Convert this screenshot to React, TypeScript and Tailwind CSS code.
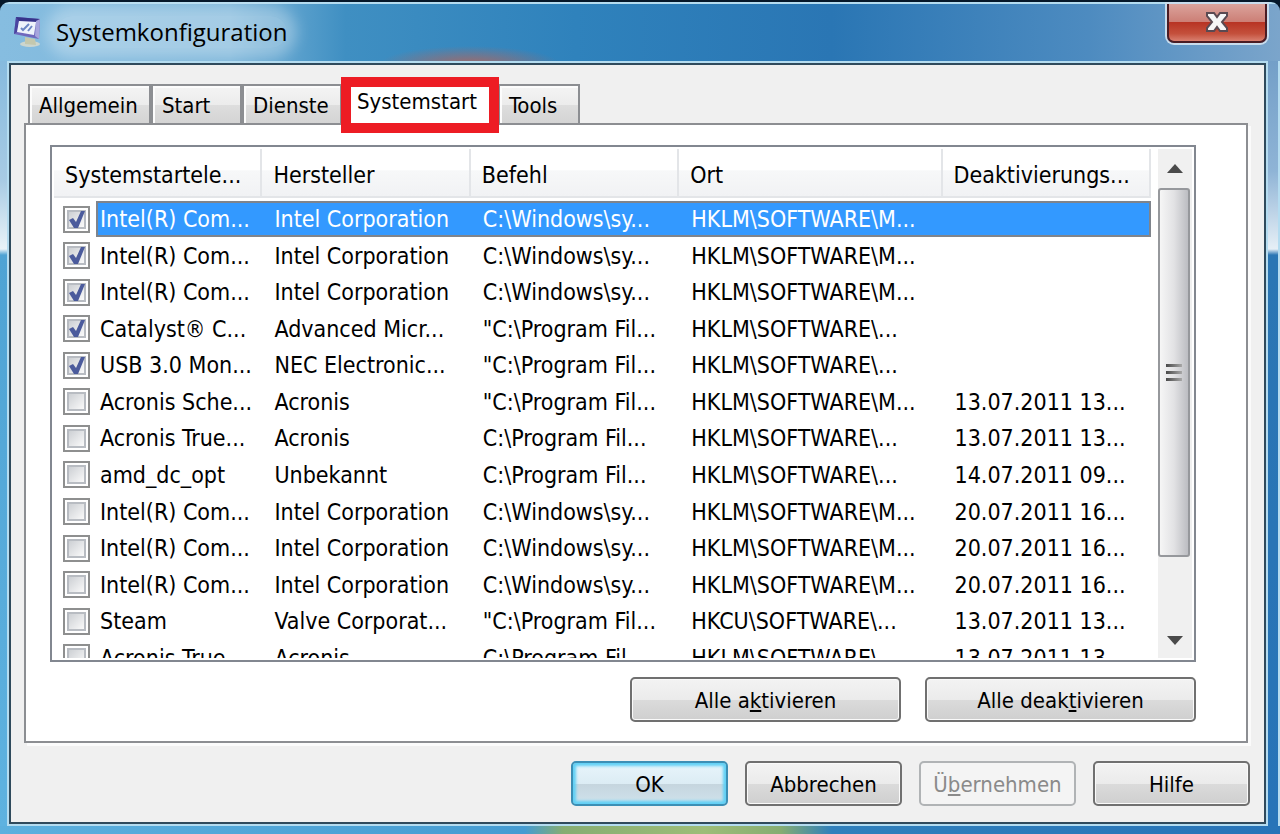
import { useState } from "react";
import clsx from "clsx";

const columns = ["Systemstartele...", "Hersteller", "Befehl", "Ort", "Deaktivierungs..."];

type Entry = { on: boolean; cells: string[] };

const entries: Entry[] = [
  { on: true, cells: ["Intel(R) Com...", "Intel Corporation", "C:\\Windows\\sy...", "HKLM\\SOFTWARE\\M...", ""] },
  { on: true, cells: ["Intel(R) Com...", "Intel Corporation", "C:\\Windows\\sy...", "HKLM\\SOFTWARE\\M...", ""] },
  { on: true, cells: ["Intel(R) Com...", "Intel Corporation", "C:\\Windows\\sy...", "HKLM\\SOFTWARE\\M...", ""] },
  { on: true, cells: ["Catalyst® C...", "Advanced Micr...", "\"C:\\Program Fil...", "HKLM\\SOFTWARE\\...", ""] },
  { on: true, cells: ["USB 3.0 Mon...", "NEC Electronic...", "\"C:\\Program Fil...", "HKLM\\SOFTWARE\\...", ""] },
  { on: false, cells: ["Acronis Sche...", "Acronis", "\"C:\\Program Fil...", "HKLM\\SOFTWARE\\M...", "13.07.2011 13..."] },
  { on: false, cells: ["Acronis True...", "Acronis", "C:\\Program Fil...", "HKLM\\SOFTWARE\\...", "13.07.2011 13..."] },
  { on: false, cells: ["amd_dc_opt", "Unbekannt", "C:\\Program Fil...", "HKLM\\SOFTWARE\\...", "14.07.2011 09..."] },
  { on: false, cells: ["Intel(R) Com...", "Intel Corporation", "C:\\Windows\\sy...", "HKLM\\SOFTWARE\\M...", "20.07.2011 16..."] },
  { on: false, cells: ["Intel(R) Com...", "Intel Corporation", "C:\\Windows\\sy...", "HKLM\\SOFTWARE\\M...", "20.07.2011 16..."] },
  { on: false, cells: ["Intel(R) Com...", "Intel Corporation", "C:\\Windows\\sy...", "HKLM\\SOFTWARE\\M...", "20.07.2011 16..."] },
  { on: false, cells: ["Steam", "Valve Corporat...", "\"C:\\Program Fil...", "HKCU\\SOFTWARE\\...", "13.07.2011 13..."] },
  { on: false, cells: ["Acronis True...", "Acronis", "C:\\Program Fil...", "HKLM\\SOFTWARE\\...", "13.07.2011 13..."] },
];

function MonitorIcon() {
  return (
    <svg viewBox="0 0 28 32" className="h-8 w-7" aria-hidden="true">
      <ellipse cx="16" cy="28" rx="10" ry="3" fill="#ccd6cf" />
      <path d="M11 21l10 2 1 6-11-1z" fill="#c4c8ae" />
      <path d="M2 1l24 2-1 20L0 18z" fill="#6f68bd" />
      <path d="M2 1l24 2-1 3L2 5z" fill="#37348a" />
      <path d="M2 1l3 4-2 11-3 2z" fill="#4a45a0" />
      <path d="M22 5l4-2-1 20-4-3z" fill="#a5a3dd" />
      <path d="M5 5l17 1-2 13L3 16z" fill="#eef3fb" />
      <path d="M7 12l2 2 6-6M14 15l4-5" fill="none" stroke="#6c86c4" strokeWidth="2" />
    </svg>
  );
}

function CheckBox({ label, defaultChecked }: { label: string; defaultChecked: boolean }) {
  return (
    <span className="relative block size-[27px] shrink-0">
      <input
        type="checkbox"
        aria-label={label}
        defaultChecked={defaultChecked}
        className="peer block size-[27px] appearance-none border-2 border-[#8e8f8f] bg-white"
      />
      <span className="pointer-events-none absolute inset-[4px] border-2 border-[#b8bcc2] bg-linear-to-br from-[#cdd0d4] to-[#fafafa]" />
      <svg viewBox="0 0 27 27" className="pointer-events-none absolute inset-0 hidden peer-checked:block" aria-hidden="true">
        <path d="M6 14l4-2 3 4 5-11 4 0-7 17h-4z" fill="#4b5b9c" />
      </svg>
    </span>
  );
}

type PushProps = { children: React.ReactNode; wide?: boolean; primary?: boolean; disabled?: boolean };

function PushButton({ children, wide, primary, disabled }: PushProps) {
  return (
    <button
      type="button"
      disabled={disabled}
      className={clsx(
        "h-[45px] rounded-[5px] border-2 pt-[2px] text-[22px] leading-7",
        wide ? "w-[271px]" : "w-[157px]",
        disabled && "border-[#b0b3b5] bg-[#f4f4f4] text-[#8a8a8a]",
        primary &&
          "border-[#3c8fb5] bg-[linear-gradient(#e8f5fb_0%,#dcecf4_50%,#c5d5de_51%,#cfe2ec_100%)] shadow-[inset_0_0_3px_3px_#5fd0f5]",
        !disabled &&
          !primary &&
          "border-[#707070] bg-[linear-gradient(#f3f3f3_0%,#ebebeb_50%,#dbdbdb_51%,#cfcfcf_100%)] shadow-[inset_0_0_0_1px_#fafafa]",
      )}
    >
      {children}
    </button>
  );
}

function TabStrip() {
  const [active, setActive] = useState("Systemstart");
  const tabs = [
    { name: "Allgemein", width: "w-[123px]" },
    { name: "Start", width: "w-[91px]" },
    { name: "Dienste", width: "w-[100px]" },
    { name: "Systemstart", width: "w-[156px]" },
    { name: "Tools", width: "w-[82px]" },
  ];

  return (
    <div role="tablist" className="flex h-[39px] pl-1">
      {tabs.map((tab) => (
        <button
          key={tab.name}
          type="button"
          role="tab"
          aria-selected={tab.name === active}
          onClick={() => setActive(tab.name)}
          className={clsx(
            "relative text-left text-[22px] leading-8 whitespace-nowrap",
            tab.width,
            tab.name === active
              ? "bg-white pb-1 pl-[15px]"
              : "border-2 border-b-0 border-[#8c8e92] bg-[linear-gradient(#f4f4f4_0%,#ececec_50%,#dedede_51%,#d4d4d4_100%)] pt-[3px] pl-[9px] shadow-[inset_2px_2px_0_#fcfcfc]",
          )}
        >
          {tab.name}
          {tab.name === active && (
            <span className="pointer-events-none absolute -inset-x-px -top-[7px] z-10 h-[56px] border-[10px] border-[#ed1c24]" />
          )}
        </button>
      ))}
    </div>
  );
}

function ScrollBar() {
  return (
    <div className="flex w-[34px] shrink-0 flex-col bg-[#f0f0f0]">
      <button type="button" aria-label="Nach oben" className="flex h-[39px] items-center justify-center">
        <svg viewBox="0 0 16 9" className="h-[9px] w-4" aria-hidden="true">
          <path d="M8 0l8 9H0z" fill="#4a4a4a" />
        </svg>
      </button>
      <div className="flex-1">
        <div className="flex h-[369px] w-[32px] flex-col items-center justify-center gap-[4px] rounded-[3px] border-2 border-[#96989c] bg-linear-to-r from-[#f6f6f6] via-[#e2e2e4] to-[#bcbdc2]">
          <span className="h-[3px] w-4 bg-linear-to-r from-[#4a4a4a] to-[#a8a8a8]" />
          <span className="h-[3px] w-4 bg-linear-to-r from-[#4a4a4a] to-[#a8a8a8]" />
          <span className="h-[3px] w-4 bg-linear-to-r from-[#4a4a4a] to-[#a8a8a8]" />
        </div>
      </div>
      <button type="button" aria-label="Nach unten" className="flex h-[35px] items-center justify-center">
        <svg viewBox="0 0 16 9" className="h-[9px] w-4" aria-hidden="true">
          <path d="M0 0h16L8 9z" fill="#4a4a4a" />
        </svg>
      </button>
    </div>
  );
}

function StartupList() {
  return (
    <div className="flex h-[517px] overflow-hidden border-2 border-[#828790] bg-white p-[2px]">
      <div className="min-w-0 flex-1 overflow-hidden">
        <table className="h-[527px] w-full table-fixed border-collapse text-[23px] leading-8 whitespace-nowrap">
          <colgroup>
            <col className="w-[19%]" />
            <col className="w-[19%]" />
            <col className="w-[19%]" />
            <col className="w-[24%]" />
            <col className="w-[19%]" />
          </colgroup>
          <thead>
            <tr className="h-[52px]">
              {columns.map((name) => (
                <th key={name} className="p-0 pb-[3px] text-left font-normal">
                  <div className="h-[49px] border-r-2 border-b-2 border-[#e3e5e8] bg-[linear-gradient(#ffffff_0%,#ffffff_45%,#f7f8f9_46%,#f1f2f4_100%)] pt-[10px] pl-[11px]">
                    {name}
                  </div>
                </th>
              ))}
            </tr>
          </thead>
          <tbody>
            {entries.map((entry, row) => (
              <tr key={row} className={clsx(row === 0 && "text-white")}>
                {entry.cells.map((cell, i) => (
                  <td key={i} className="h-[36px] p-0">
                    {i === 0 ? (
                      <div className="flex items-center pl-[9px]">
                        <CheckBox label={cell} defaultChecked={entry.on} />
                        <span
                          className={clsx(
                            "ml-[6px] h-[36px] flex-1 pt-[2px]",
                            row === 0 ? "border-y-2 border-l-2 border-[#7f848c] bg-[#3399ff] pl-[2px] leading-7" : "pl-1",
                          )}
                        >
                          {cell}
                        </span>
                      </div>
                    ) : (
                      <div
                        className={clsx(
                          "h-[36px] pt-[2px] pl-3",
                          row === 0 && "border-y-2 border-[#7f848c] bg-[#3399ff] leading-7",
                          row === 0 && i === 4 && "border-r-2",
                        )}
                      >
                        {cell}
                      </div>
                    )}
                  </td>
                ))}
              </tr>
            ))}
          </tbody>
        </table>
      </div>
      <div className="w-[7px] shrink-0" />
      <ScrollBar />
    </div>
  );
}

export default function App() {
  return (
    <div className="flex min-h-screen flex-col bg-[#06182a] pt-[2px] font-['DejaVu_Sans_Condensed','DejaVu_Sans',sans-serif] text-black">
      <div className="flex flex-1 flex-col overflow-hidden rounded-t-[9px]">
        {/* Glass title bar */}
        <header className="flex h-[59px] items-start justify-between border-t-2 border-[#b4dcf0] bg-[radial-gradient(ellipse_90px_18px_at_470px_60px,#a06a6a_0%,transparent_100%),linear-gradient(90deg,#86bde0_0%,#7db6da_18%,#3f8fc2_27%,#2f82bc_45%,#2a76b4_65%,#4d8bc0_85%,#7ba5cb_100%)] pr-[13px] pl-[14px]">
          <div className="flex items-center gap-[14px] pt-[12px]">
            <MonitorIcon />
            <h1 className="rounded-full bg-white/30 font-['Open_Sans','Noto_Sans',sans-serif] text-[24px] leading-8 shadow-[0_0_14px_10px_rgba(255,255,255,0.3)]">
              Systemkonfiguration
            </h1>
          </div>
          <button
            type="button"
            aria-label="Schließen"
            className="flex h-[39px] w-[100px] items-center justify-center rounded-b-[7px] border-2 border-t-0 border-[#4a1c24] bg-[linear-gradient(#dba39c_0%,#cc7f76_48%,#b83424_50%,#c4503c_80%,#d98070_100%)] pb-[2px] shadow-[0_0_0_2px_#c9dcec]"
          >
            <svg viewBox="0 0 24 22" className="h-[22px] w-6" aria-hidden="true">
              <path
                d="M2 2h7l3 4 3-4h7v3l-5 6 5 6v3h-7l-3-4-3 4H2v-3l5-6-5-6z"
                fill="#f6f6f6"
                stroke="#5a4a52"
                strokeWidth="2"
              />
            </svg>
          </button>
        </header>

        <div className="flex flex-1">
          <div className="w-[7px] shrink-0 bg-[linear-gradient(#86bade_0,#a8cbe4_120px,#eaf3f8_188px,#4fa3d4_194px,#5eb2e0_100%)]" />

          <main className="flex min-w-0 flex-1 flex-col border-2 border-[#b4dcf0]">
            <div className="flex flex-1 flex-col border-2 border-[#2f4a5c] bg-[#f0f0f0] pt-[19px] pr-[14px] pb-[15px] pl-[13px]">
              <TabStrip />

              <section className="mr-[2px] border-2 border-[#8c8e92] bg-white pt-5 pr-[50px] pb-[19px] pl-6 shadow-[3px_3px_0_#fbfbfb]">
                <StartupList />
                <div className="mt-[15px] flex justify-end gap-6">
                  <PushButton wide>
                    Alle a<u>k</u>tivieren
                  </PushButton>
                  <PushButton wide>
                    Alle deak<u>t</u>ivieren
                  </PushButton>
                </div>
              </section>

              <footer className="mt-[18px] flex justify-end gap-[17px]">
                <PushButton primary>OK</PushButton>
                <PushButton>Abbrechen</PushButton>
                <PushButton disabled>
                  Ü<u>b</u>ernehmen
                </PushButton>
                <PushButton>Hilfe</PushButton>
              </footer>
            </div>
          </main>

          <div className="w-[12px] shrink-0 border-r-2 border-[#b4dcf0] bg-[linear-gradient(#739fc8_0,#8fb4d6_110px,#e6eff6_188px,#2b76b4_194px,#2774b8_100%)]" />
        </div>

        <div className="h-[8px] bg-[linear-gradient(90deg,#5cb0de_0%,#459cd2_41%,#86ad72_44%,#9dbd78_55%,#86ad72_61%,#2f80bc_65%,#2774b8_100%)]" />
      </div>
    </div>
  );
}
